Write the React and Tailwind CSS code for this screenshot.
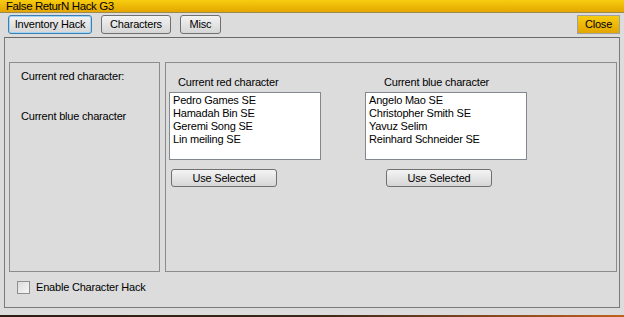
const redChars = ['Pedro Games SE', 'Hamadah Bin SE', 'Geremi Song SE', 'Lin meiling SE']
const blueChars = ['Angelo Mao SE', 'Christopher Smith SE', 'Yavuz Selim', 'Reinhard Schneider SE']

function ListPick({ label, items, width, labelPad, btnPad }) {
  return (
    <div className={`flex flex-col ${width}`}>
      <div className={`h-[17px] leading-[15px] ${labelPad}`}>{label}</div>
      <div className="h-[68px] border border-[#828790] bg-white px-[3px] pt-[1px]">
        {items.map((name) => (
          <div key={name} className="h-[13px] leading-[13px]">{name}</div>
        ))}
      </div>
      <div className={`mt-[9px] flex ${btnPad}`}>
        <button className="h-[18px] w-[106px] rounded-[3px] border border-[#707070] bg-gradient-to-b from-[#f4f4f4] to-[#d6d6d6] leading-[14px]">
          Use Selected
        </button>
      </div>
    </div>
  )
}

export default function App() {
  return (
    <div className="flex h-[317px] w-[624px] flex-col bg-[#dcdcdc] text-[11px] tracking-[-0.2px] text-black" style={{ fontFamily: '"Liberation Sans", Arial, sans-serif' }}>
      <div className="h-[13px] border-b border-[#9a8a50] bg-gradient-to-b from-[#f7cc10] to-[#e3a600] pl-[6px] text-[11.5px] leading-[12px] tracking-[-0.4px]">
        False ReturN Hack G3
      </div>

      <div className="flex h-[24px] items-start pt-[2px] pl-[8px] pr-[4px]">
        <button className="h-[19px] w-[84px] rounded-[3px] border border-[#3c7fb1] bg-gradient-to-b from-[#f2f2f2] to-[#d6d6d6] leading-[15px] shadow-[inset_0_0_0_1px_#9ed4f5]">
          Inventory Hack
        </button>
        <button className="ml-[9px] h-[19px] w-[70px] rounded-[3px] border border-[#707070] bg-gradient-to-b from-[#f2f2f2] to-[#d6d6d6] leading-[15px]">
          Characters
        </button>
        <button className="ml-[9px] h-[19px] w-[41px] rounded-[3px] border border-[#707070] bg-gradient-to-b from-[#f2f2f2] to-[#d6d6d6] leading-[15px]">
          Misc
        </button>
        <button className="ml-auto h-[19px] w-[43px] border border-[#a0a0a0] bg-gradient-to-b from-[#f7cc10] to-[#e3a600] leading-[15px]">
          Close
        </button>
      </div>

      <div className="mx-[4px] flex h-[271px] flex-col border border-[#7a7a7a] border-t-[#6a6a6a] pl-[4px] pr-[2px] pt-[24px]">
        <div className="flex h-[210px] gap-[5px]">
          <div className="w-[151px] border border-[#8c8c8c] pl-[11px] pt-[6px]">
            <div className="h-[14px] leading-[14px]">Current red character:</div>
            <div className="mt-[26px] h-[14px] leading-[14px]">Current blue character</div>
          </div>
          <div className="flex flex-1 border border-[#8c8c8c] pl-[3px] pt-[12px]">
            <ListPick label="Current red character" items={redChars} width="w-[152px]" labelPad="pl-[9px]" btnPad="pl-[2px]" />
            <div className="ml-[44px]">
              <ListPick label="Current blue character" items={blueChars} width="w-[162px]" labelPad="pl-[19px]" btnPad="pl-[21px]" />
            </div>
          </div>
        </div>
        <div className="flex items-center pl-[8px] pt-[9px]">
          <div className="h-[13px] w-[13px] border border-[#8e8f8f] bg-gradient-to-br from-[#dcdcdc] to-[#f6f6f6]" />
          <span className="ml-[6px] leading-[13px]">Enable Character Hack</span>
        </div>
      </div>

      <div className="mt-auto h-[2px] bg-gradient-to-r from-[#2a1d14] via-[#3a2818] to-[#c0601c]" />
    </div>
  )
}
